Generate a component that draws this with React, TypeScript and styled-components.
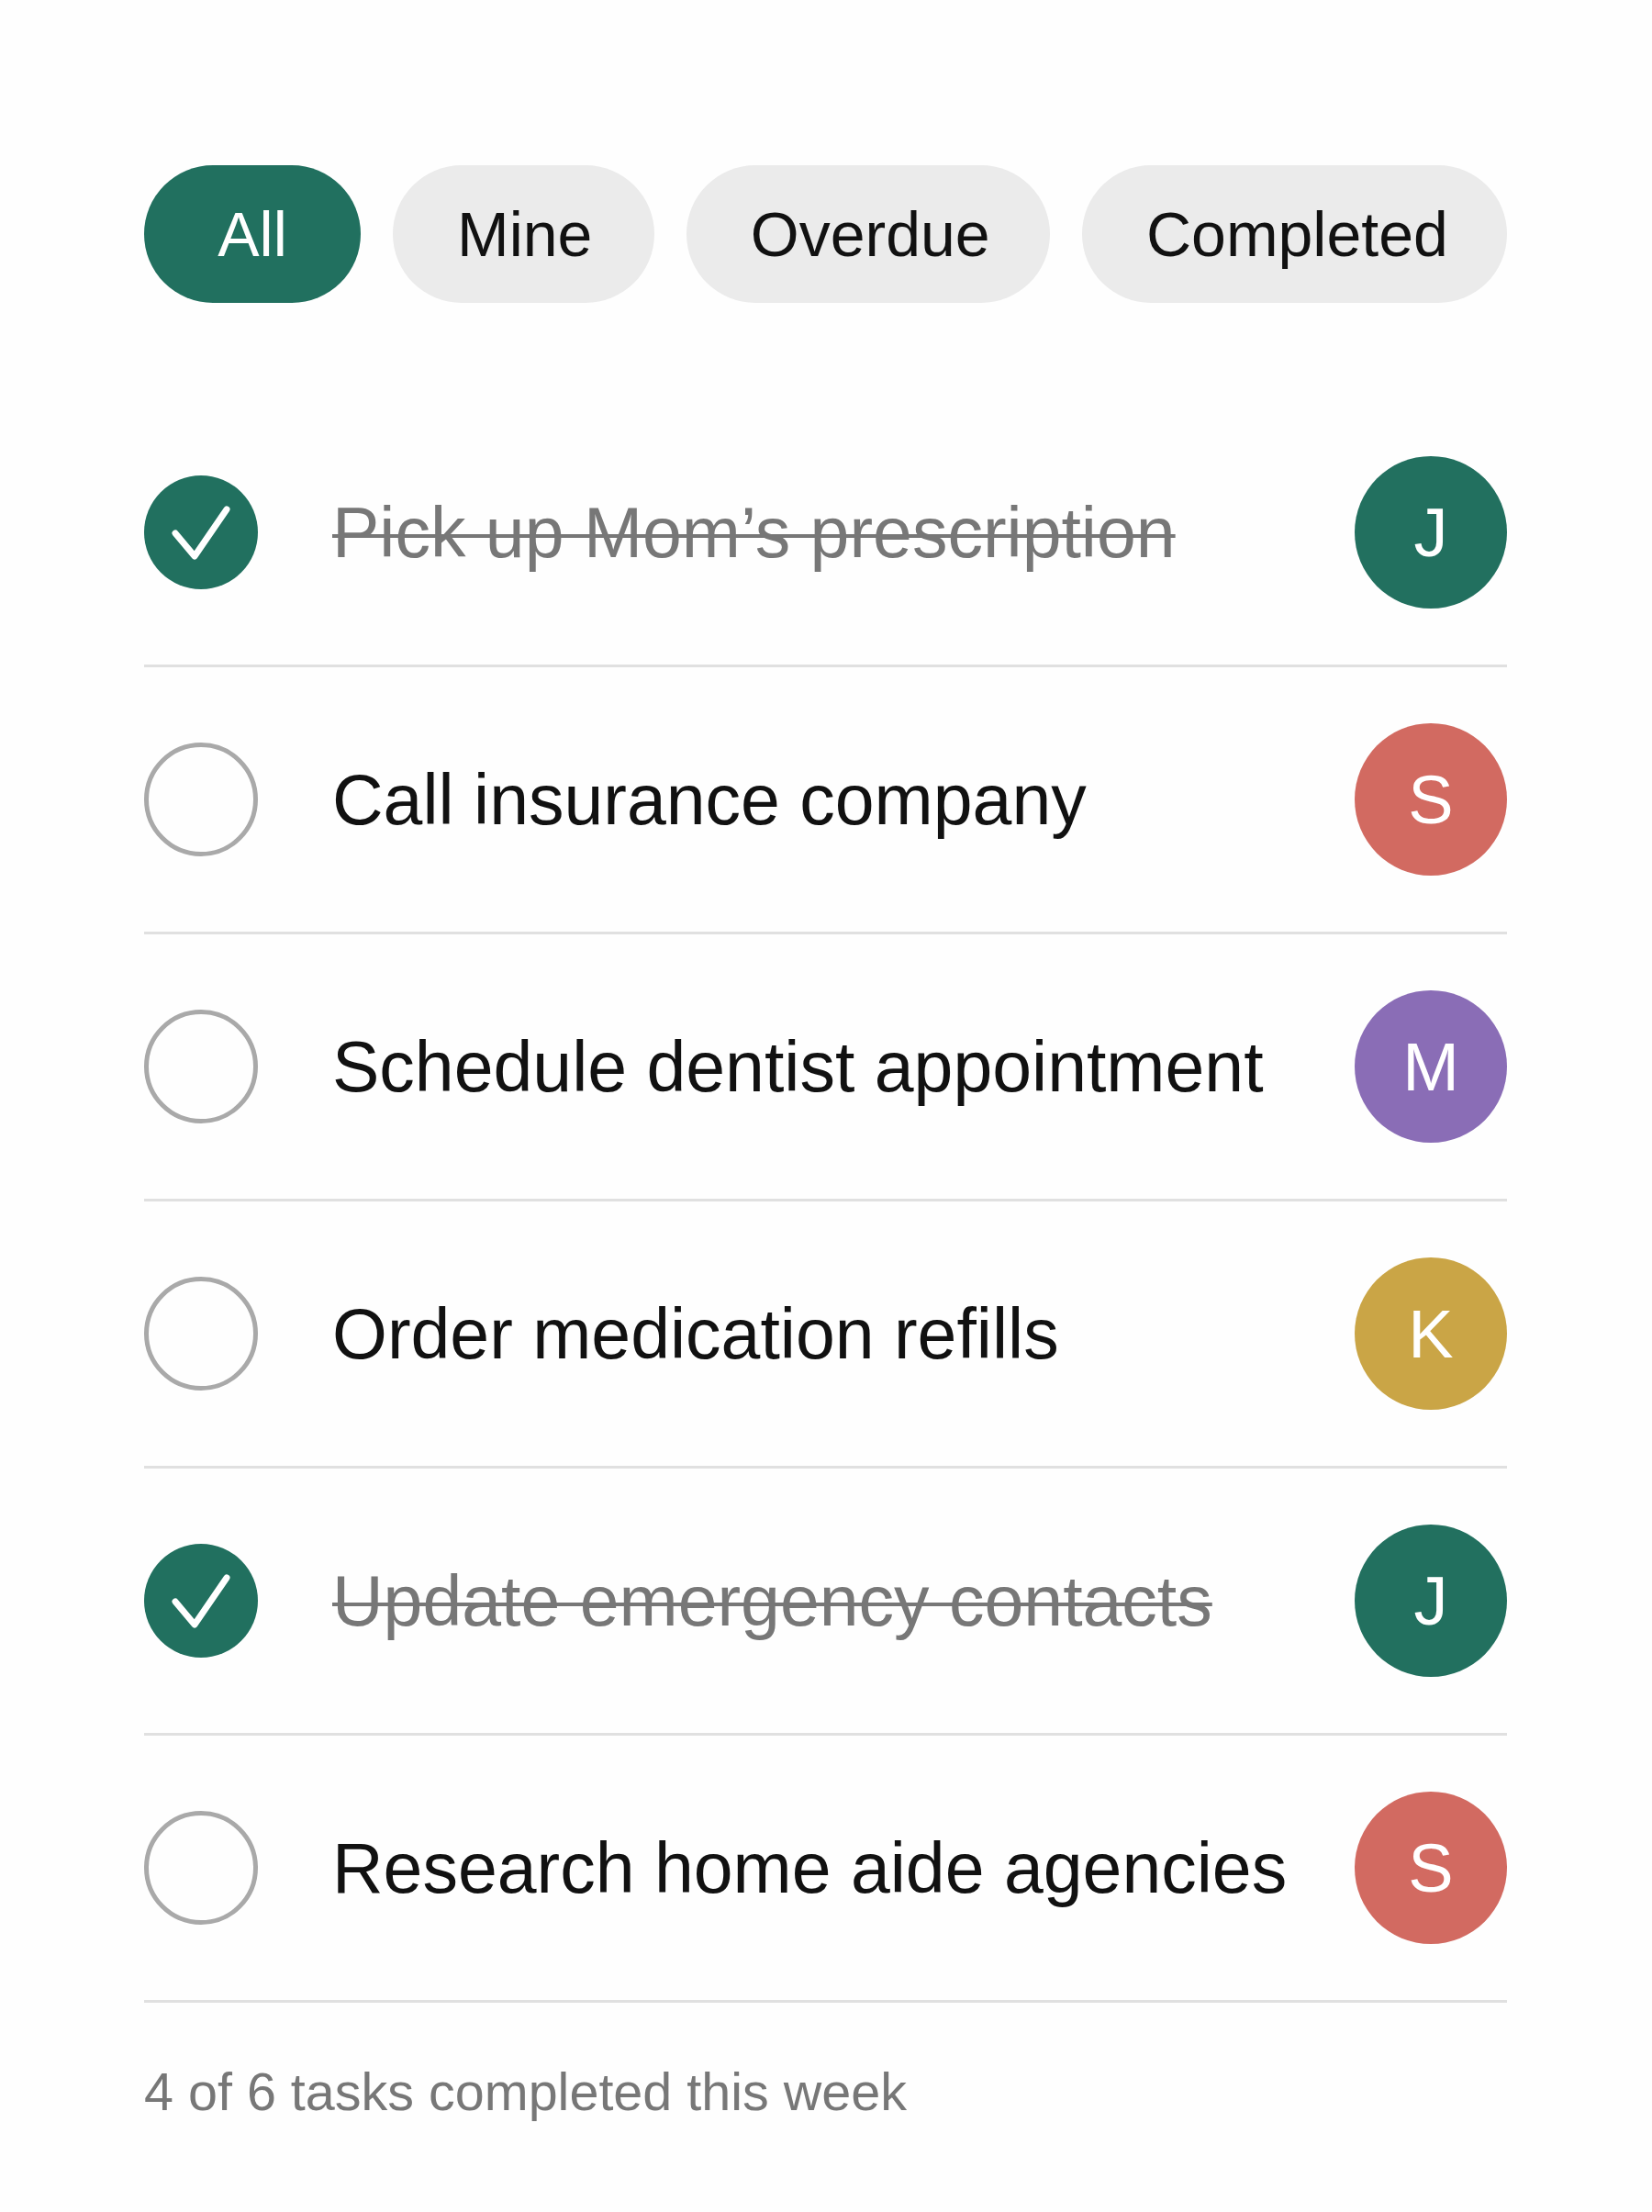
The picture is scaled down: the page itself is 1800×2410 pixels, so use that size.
import React, { useState } from 'react';
import styled, { createGlobalStyle } from 'styled-components';

const GlobalStyle = createGlobalStyle`
    html, body {
        margin: 0;
        padding: 0;
        background: #fefefe;
        font-family: "Liberation Sans", Arial, Helvetica, sans-serif;
    }
`;

const Page = styled.div`
    width: 1800px;
    min-height: 2410px;
    box-sizing: border-box;
    padding: 180px 158px 0 157px;
`;

const FilterBar = styled.div`
    display: flex;
    flex-direction: row;
    gap: 35px;
`;

const Pill = styled.button<{ active: boolean }>`
    height: 150px;
    min-width: 236px;
    padding: 0 70px;
    border: none;
    border-radius: 75px;
    background: ${(props) => (props.active ? '#21705f' : '#ebebeb')};
    color: ${(props) => (props.active ? '#ffffff' : '#111111')};
    font-family: inherit;
    font-size: 68px;
    cursor: pointer;
`;

const TaskList = styled.ul`
    list-style: none;
    margin: 106px 0 0 0;
    padding: 0;
`;

const Row = styled.li`
    display: flex;
    flex-direction: row;
    align-items: center;
    height: 288px;
    border-bottom: 3px solid #e0e0e0;
`;

const CheckButton = styled.button<{ done: boolean }>`
    flex: none;
    width: 124px;
    height: 124px;
    padding: 0;
    border-radius: 50%;
    box-sizing: border-box;
    border: ${(props) => (props.done ? 'none' : '5px solid #a9a9a9')};
    background: ${(props) => (props.done ? '#21705f' : 'transparent')};
    display: flex;
    align-items: center;
    justify-content: center;
    cursor: pointer;
`;

const TaskText = styled.span<{ done: boolean }>`
    margin-left: 81px;
    font-size: 77px;
    color: ${(props) => (props.done ? '#777777' : '#111111')};
    text-decoration: ${(props) => (props.done ? 'line-through' : 'none')};
    text-decoration-thickness: 4px;
    white-space: nowrap;
`;

const Avatar = styled.div<{ color: string }>`
    flex: none;
    margin-left: auto;
    width: 166px;
    height: 166px;
    border-radius: 50%;
    background: ${(props) => props.color};
    color: #ffffff;
    font-size: 74px;
    display: flex;
    align-items: center;
    justify-content: center;
`;

const Summary = styled.p`
    margin: 63px 0 0 0;
    font-size: 57.5px;
    line-height: 1.2;
    color: #777777;
`;

const people = {
    J: '#22705f',
    S: '#d26a61',
    M: '#8a6db6',
    K: '#caa546',
};

const initialTasks = [
    { id: 1, title: 'Pick up Mom’s prescription', who: 'J', done: true },
    { id: 2, title: 'Call insurance company', who: 'S', done: false },
    { id: 3, title: 'Schedule dentist appointment', who: 'M', done: false },
    { id: 4, title: 'Order medication refills', who: 'K', done: false },
    { id: 5, title: 'Update emergency contacts', who: 'J', done: true },
    { id: 6, title: 'Research home aide agencies', who: 'S', done: false },
];

const filters = ['All', 'Mine', 'Overdue', 'Completed'];

const CheckMark = () => (
    <svg width="124" height="124" viewBox="0 0 124 124" fill="none">
        <path
            d="M34 63 L55 88 L90 37"
            stroke="#ffffff"
            strokeWidth="7"
            strokeLinecap="round"
            strokeLinejoin="round"
        />
    </svg>
);

export default function App() {
    const [filter, setFilter] = useState('All');
    const [tasks, setTasks] = useState(initialTasks);

    const toggle = (id: number) => {
        setTasks((list) => list.map((t) => (t.id === id ? { ...t, done: !t.done } : t)));
    };

    return (
        <>
            <GlobalStyle />
            <Page>
                <FilterBar>
                    {filters.map((f) => (
                        <Pill key={f} type="button" active={filter === f} onClick={() => setFilter(f)}>
                            {f}
                        </Pill>
                    ))}
                </FilterBar>
                <TaskList>
                    {tasks.map((t) => (
                        <Row key={t.id}>
                            <CheckButton type="button" done={t.done} onClick={() => toggle(t.id)}>
                                {t.done && <CheckMark />}
                            </CheckButton>
                            <TaskText done={t.done}>{t.title}</TaskText>
                            <Avatar color={people[t.who as keyof typeof people]}>{t.who}</Avatar>
                        </Row>
                    ))}
                </TaskList>
                <Summary>4 of 6 tasks completed this week</Summary>
            </Page>
        </>
    );
}
